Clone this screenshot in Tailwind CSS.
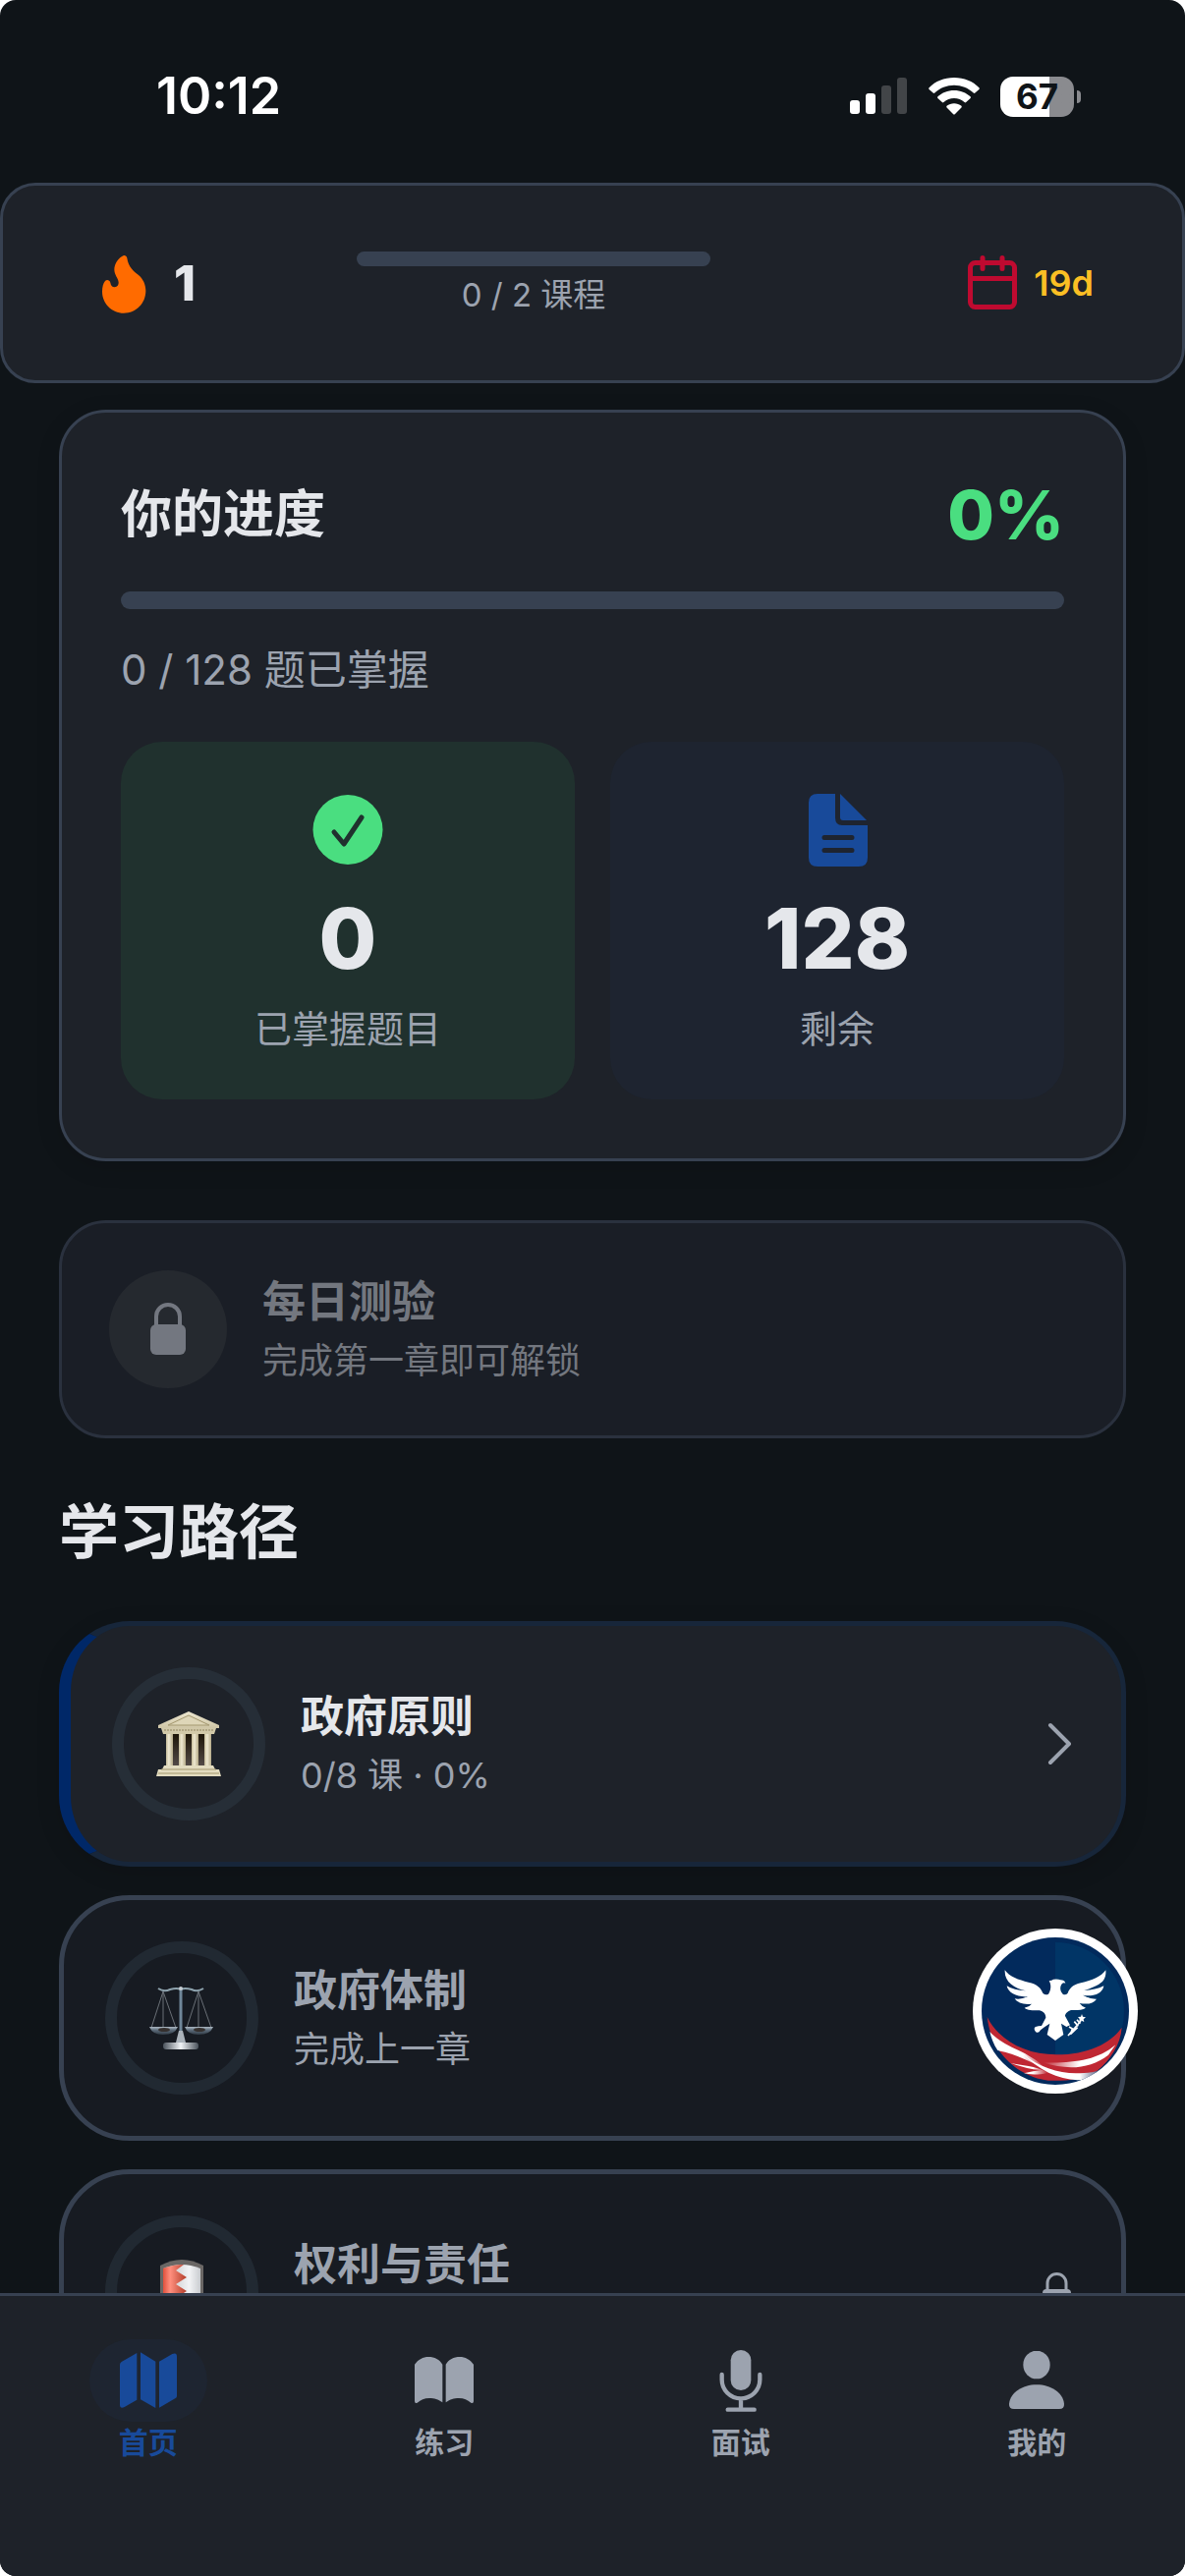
<!DOCTYPE html>
<html lang="zh-CN">
<head>
<meta charset="UTF-8" />
<meta name="viewport" content="width=device-width, initial-scale=1" />
<title>学习路径</title>
<script src="https://cdn.jsdelivr.net/npm/@tailwindcss/browser@4"></script>
<style>
  body {
    background-color: #ffffff;
    font-family: 'Inter', 'Noto Sans CJK SC', sans-serif;
  }
</style>
</head>
<body>
<div class="relative h-screen flex flex-col overflow-hidden rounded-2xl bg-[#0f1418] text-[#e5e7eb]">

  <!-- Status bar -->
  <div class="h-[186px] shrink-0 pt-[68px] pl-[159px] pr-[106px]">
    <div class="h-[60px] flex items-center justify-between text-white">
      <time class="text-[52px] leading-[60px] font-semibold">10:12</time>
      <div class="flex items-center gap-[21px]">
        <svg class="w-[59px] h-[38px]" viewBox="0 0 59 38" fill="#fff" aria-label="Signal">
          <rect x="0" y="23" width="10" height="14" rx="3" />
          <rect x="16" y="16" width="10" height="21" rx="3" />
          <rect x="32" y="8" width="10" height="29" rx="3" fill="#424548" />
          <rect x="48" y="0" width="10" height="37" rx="3" fill="#424548" />
        </svg>
        <svg class="w-[52px] h-[38px]" viewBox="0 0 152 112" fill="#fff" aria-label="Wi-Fi">
          <path d="M76 0C106 0 132 11 151 30Q153 33 151 35L139 46Q137 48 134 46C118 31 98 23 76 23C54 23 34 31 18 46Q15 48 13 46L1 35Q-1 33 1 30C20 11 46 0 76 0Z" />
          <path d="M76 38C95 38 112 45 125 57Q127 60 125 62L112 74Q110 76 107 74C98 66 88 62 76 62C64 62 54 66 45 74Q42 76 40 74L27 62Q25 60 27 57C40 45 57 38 76 38Z" />
          <path d="M76 77C84 77 92 80 98 85Q100 88 98 90L79 109Q76 112 73 109L54 90Q52 88 54 85C60 80 68 77 76 77Z" />
        </svg>
        <div class="flex items-center gap-[3px]">
          <div class="w-[75px] h-[41px] rounded-[13px] bg-linear-to-r from-white from-67% to-[#8a8b8f] to-67% text-[#0f1418] text-[35px] leading-[41px] font-bold text-center">67</div>
          <div class="w-[4px] h-[13px] rounded-r-full bg-[#8a8b8f]"></div>
        </div>
      </div>
    </div>
  </div>

  <!-- Streak / daily goal / countdown -->
  <header class="shrink-0 h-[204px] flex items-center pl-[93px] pr-[90px] rounded-[36px] border-3 border-[#374151] bg-[#1e2229]">
    <div class="w-[267px] flex items-center gap-[21px]">
      <svg class="w-[60px] h-[60px]" viewBox="48 54 180 180" overflow="visible" fill="#ff6b00">
        <path d="M138 60C142 59 147 62 148 68C152 95 168 108 183 120C197 132 205 149 205 168C205 206 176 236 138 236C101 236 72 206 72 170C72 157 75 145 81 138C86 133 95 135 97 143C98 151 102 157 110 157C118 156 123 150 122 142C120 128 109 120 109 103C109 86 122 66 138 60Z" />
      </svg>
      <span class="text-[50px] leading-[60px] font-extrabold">1</span>
    </div>
    <div class="w-[360px]">
      <div class="h-[15px] rounded-full bg-[#374151]" role="progressbar" aria-valuenow="0" aria-valuemax="2" aria-label="课程"></div>
      <p class="mt-2 text-[33px] leading-[42px] text-center text-[#9ca3af]">0 / 2 课程</p>
    </div>
    <div class="ml-auto flex items-center gap-3">
      <svg class="w-[60px] h-[60px]" viewBox="979 258 60 60" fill="none" stroke="#bf0a30" stroke-width="5" stroke-linecap="round">
        <rect x="986.5" y="267.5" width="45" height="45" rx="5" />
        <path d="M987 283.500H1031M999 262.500V273.500M1019 262.500V273.500" />
      </svg>
      <span class="text-[36px] leading-[48px] font-semibold text-[#fbbf24]">19d</span>
    </div>
  </header>

  <main class="flex-1 min-h-0 overflow-hidden px-[60px] pt-[27px]">

    <!-- Progress -->
    <section class="p-[60px] rounded-[48px] border-3 border-[#374151] bg-[#1e2229] shadow-[0_6px_24px_rgba(0,0,0,0.12)]">
      <div class="h-[88px] flex items-center justify-between">
        <h2 class="text-[52px] leading-[66px] font-bold">你的进度</h2>
        <span class="text-[69px] leading-[86px] font-extrabold text-[#4ade80]">0%</span>
      </div>
      <div class="mt-[34px] h-[18px] rounded-full bg-[#374151]" role="progressbar" aria-valuenow="0" aria-valuemax="128" aria-label="你的进度"></div>
      <p class="mt-[36px] text-[42px] leading-[51px] text-[#9ca3af]">0 / 128 题已掌握</p>
      <div class="mt-[48px] grid grid-cols-2 gap-[36px]">
        <div class="py-[48px] flex flex-col items-center rounded-[42px] bg-[#20312e]">
          <svg class="w-[84px] h-[84px]" viewBox="311 803 84 84" fill="none">
            <circle cx="353" cy="844.500" r="35.500" fill="#4ade80" />
            <path d="M339 847L349 859L367 832" stroke="#20312e" stroke-width="5" stroke-linecap="round" stroke-linejoin="round" />
          </svg>
          <span class="my-[18px] text-[85px] leading-[101px] font-extrabold">0</span>
          <span class="text-[38px] leading-[47px] text-[#9ca3af]">已掌握题目</span>
        </div>
        <div class="py-[48px] flex flex-col items-center rounded-[42px] bg-[#1e2430]">
          <svg class="w-[84px] h-[84px]" viewBox="810 803 84 84" fill="#184a9a">
            <path d="M832 808H850V832Q850 840 857 840H883V873Q883 882 874 882H832Q823 882 823 873V817Q823 808 832 808Z" />
            <path d="M855 808L882 835H858Q855 835 855 832Z" />
            <path d="M839 852.500H867M839 865.500H867" stroke="#1e2430" stroke-width="5" stroke-linecap="round" />
          </svg>
          <span class="my-[18px] text-[85px] leading-[101px] font-extrabold">128</span>
          <span class="text-[38px] leading-[47px] text-[#9ca3af]">剩余</span>
        </div>
      </div>
    </section>

    <!-- Daily quiz, locked -->
    <button type="button" disabled class="mt-[60px] w-full p-[48px] flex items-center gap-[36px] text-left rounded-[48px] border-3 border-[#2a313e] bg-[#1a1e26] text-[#73777f]">
      <span class="w-[120px] h-[120px] flex items-center justify-center rounded-full bg-[#25292f]">
        <svg class="w-[60px] h-[60px]" viewBox="141 1323 60 60" fill="#737780">
          <rect x="153" y="1348" width="36" height="31" rx="6" />
          <path d="M159 1350V1340a12 12 0 0 1 24 0V1350" fill="none" stroke="#737780" stroke-width="4" />
        </svg>
      </span>
      <span class="flex flex-col gap-2">
        <span class="text-[44px] leading-[56px] font-bold">每日测验</span>
        <span class="text-[36px] leading-[48px]">完成第一章即可解锁</span>
      </span>
    </button>

    <h2 class="mt-[60px] text-[61px] leading-[72px] font-bold">学习路径</h2>

    <!-- Chapters -->
    <div class="mt-[54px] flex flex-col gap-[29px]">
      <a href="#" class="p-[42px] flex items-center rounded-[72px] border-5 border-l-12 border-[#17263a] border-l-[#002868] bg-[#1e2229] shadow-[0_6px_24px_rgba(0,0,0,0.12)]">
        <span class="w-[156px] h-[156px] flex items-center justify-center rounded-full border-12 border-[#262e37]">
          <svg class="w-[66px] h-[67px]" viewBox="0 0 66 67">
            <defs>
              <linearGradient id="stone" x1="0" x2="0" y1="0" y2="1">
                <stop offset="0" stop-color="#ece6cf" />
                <stop offset="1" stop-color="#cfc6a6" />
              </linearGradient>
              <linearGradient id="column" x1="0" x2="1" y1="0" y2="0">
                <stop offset="0" stop-color="#c4ba98" />
                <stop offset="0.4" stop-color="#efe9d2" />
                <stop offset="1" stop-color="#b5aa88" />
              </linearGradient>
              <linearGradient id="inside" x1="0" x2="0" y1="0" y2="1">
                <stop offset="0" stop-color="#1d1508" />
                <stop offset="1" stop-color="#544b48" />
              </linearGradient>
            </defs>
            <path d="M33 0L64 14V17H2V14Z" fill="url(#stone)" />
            <path d="M33 4L54 14H12Z" fill="#ded6b8" stroke="#a3976f" />
            <path d="M5 17H61L59 23H7Z" fill="#d2c9a9" />
            <path d="M8 19H58" stroke="#8f8461" stroke-dasharray="2 1" />
            <rect x="10" y="23" width="46" height="33" fill="url(#inside)" />
            <rect x="10" y="23" width="7" height="33" fill="url(#column)" />
            <rect x="23" y="23" width="7" height="33" fill="url(#column)" />
            <rect x="36" y="23" width="7" height="33" fill="url(#column)" />
            <rect x="49" y="23" width="7" height="33" fill="url(#column)" />
            <path d="M8 55H58L60 59H64L66 66H0L2 59H6Z" fill="#e3dcc0" />
            <path d="M5 59H61M2 63H64" stroke="#a3976f" />
          </svg>
        </span>
        <span class="ml-[36px] flex-1 flex flex-col gap-2">
          <span class="text-[44px] leading-[56px] font-bold">政府原则</span>
          <span class="text-[36px] leading-[48px] text-[#9ca3af]">0/8 课 · 0%</span>
        </span>
        <svg class="w-[48px] h-[48px]" viewBox="0 0 48 48" fill="none" stroke="#9ca3af" stroke-width="4" stroke-linecap="round" stroke-linejoin="round">
          <path d="M18 5L37 24L18 43" />
        </svg>
      </a>

      <a href="#" aria-disabled="true" class="p-[42px] flex items-center rounded-[72px] border-5 border-[#374151] bg-[#171b22] text-[#9ca3af]">
        <span class="w-[156px] h-[156px] flex items-center justify-center rounded-full border-12 border-[#212932]">
          <svg class="w-[66px] h-[66px]" viewBox="152 2022 66 66" fill="none">
            <defs>
              <linearGradient id="steel" x1="0" x2="0" y1="0" y2="1">
                <stop offset="0" stop-color="#aebac4" />
                <stop offset="0.4" stop-color="#5e6d7c" />
                <stop offset="1" stop-color="#303a44" />
              </linearGradient>
              <linearGradient id="foot" x1="0" x2="1" y1="0" y2="0">
                <stop offset="0" stop-color="#4a525b" />
                <stop offset="0.5" stop-color="#f1f4f7" />
                <stop offset="1" stop-color="#4a525b" />
              </linearGradient>
            </defs>
            <path d="M161 2025Q167 2029 173 2026Q180 2024 184 2026Q188 2024 195 2026Q201 2029 207 2025" stroke="#8ea3ae" stroke-width="2" />
            <path d="M166 2028L154 2065M166 2028V2065M166 2028L179 2065M202 2028L190 2065M202 2028V2065M202 2028L215 2065" stroke="#6a7077" />
            <path d="M152 2064H181Q178 2072 166 2072Q155 2072 152 2064Z" fill="url(#steel)" />
            <path d="M188 2064H217Q214 2072 202 2072Q191 2072 188 2064Z" fill="url(#steel)" />
            <ellipse cx="167" cy="2067" rx="6" ry="2" fill="#35302e" />
            <ellipse cx="203" cy="2067" rx="6" ry="2" fill="#35302e" />
            <path d="M184 2026V2078" stroke="#6f8799" stroke-width="3" />
            <path d="M182 2068H186L189 2080H179Z" fill="#aab2ba" />
            <circle cx="184" cy="2025" r="2" fill="#c4ccd2" />
            <rect x="166" y="2080" width="36" height="7" rx="3" fill="url(#foot)" />
          </svg>
        </span>
        <span class="ml-[36px] flex-1 flex flex-col gap-2">
          <span class="text-[44px] leading-[56px] font-bold">政府体制</span>
          <span class="text-[36px] leading-[48px]">完成上一章</span>
        </span>
      </a>

      <a href="#" aria-disabled="true" class="p-[42px] flex items-center rounded-[72px] border-5 border-[#374151] bg-[#171b22] text-[#9ca3af]">
        <span class="w-[156px] h-[156px] flex items-center justify-center rounded-full border-12 border-[#212932]">
          <svg class="w-[66px] h-[66px]" viewBox="0 0 66 66">
            <defs>
              <linearGradient id="red" x1="0" x2="1" y1="0" y2="0">
                <stop offset="0" stop-color="#e0503c" />
                <stop offset="0.3" stop-color="#ff8f7e" />
                <stop offset="1" stop-color="#b33d2a" />
              </linearGradient>
              <linearGradient id="white" x1="0" x2="1" y1="0" y2="0">
                <stop offset="0" stop-color="#b9bbbd" />
                <stop offset="0.7" stop-color="#f2f3f5" />
                <stop offset="1" stop-color="#c9ccd0" />
              </linearGradient>
            </defs>
            <path d="M11 6Q22 0 33 0Q44 0 55 6V38Q53 55 33 65Q13 55 11 38Z" fill="#6a6765" />
            <path d="M14 9Q24 5 33 5Q42 5 52 9V38Q50 52 33 61Q16 52 14 38Z" fill="url(#white)" />
            <path d="M14 9Q24 5 35 5L27 11L38 18L27 25L38 32L27 39L37 46L33 61Q16 52 14 38Z" fill="url(#red)" />
          </svg>
        </span>
        <span class="ml-[36px] flex-1 h-[112px]">
          <span class="text-[44px] leading-[56px] font-bold">权利与责任</span>
        </span>
        <svg class="w-[48px] h-[48px]" viewBox="1051 2308 48 48" fill="#9ca3af">
          <rect x="1061" y="2329" width="29" height="24" rx="4" />
          <path d="M1066 2330V2323a9.500 9.500 0 0 1 19 0V2330" fill="none" stroke="#9ca3af" stroke-width="3" />
        </svg>
      </a>
    </div>
  </main>

  <!-- Floating assistant button -->
  <button type="button" aria-label="助手" class="absolute right-[48px] bottom-[491px] w-[168px] h-[168px] rounded-full">
    <svg class="w-full h-full" viewBox="270 188 504 504">
      <defs>
        <clipPath id="disc"><circle cx="522" cy="440" r="225" /></clipPath>
        <linearGradient id="fadeLeft" x1="0" x2="1" y1="0" y2="0">
          <stop offset="0" stop-color="#fff" />
          <stop offset="0.6" stop-color="#fff" />
          <stop offset="1" stop-color="#fff" stop-opacity="0" />
        </linearGradient>
        <linearGradient id="fadeRight" x1="0" x2="1" y1="0" y2="0">
          <stop offset="0" stop-color="#fff" stop-opacity="0" />
          <stop offset="0.5" stop-color="#fff" />
          <stop offset="1" stop-color="#fff" />
        </linearGradient>
        <linearGradient id="swoosh" x1="0" x2="1" y1="0" y2="0">
          <stop offset="0" stop-color="#fff" />
          <stop offset="0.7" stop-color="#fff" />
          <stop offset="1" stop-color="#28325e" />
        </linearGradient>
      </defs>
      <circle cx="522" cy="440" r="252" fill="#fff" />
      <circle cx="522" cy="440" r="225" fill="#022a5c" />
      <g clip-path="url(#disc)">
        <path d="M522 230A210 210 0 0 1 522 650Z" fill="#013566" />
        <!-- flag ribbon -->
        <path d="M314 458C350 530 430 573 525 573C620 573 690 540 725 490C722 540 690 590 650 622C600 652 545 654 500 652C440 645 385 610 350 560C330 530 318 495 314 458Z" fill="#bf2733" />
        <path d="M322 503C350 535 395 552 430 570C460 588 480 600 492 618C460 600 400 570 346 560C334 542 326 522 322 503Z" fill="url(#fadeLeft)" />
        <path d="M385 598C420 606 460 606 500 628C460 638 440 632 426 630Q455 622 480 620Q430 616 385 598Z" fill="url(#fadeLeft)" />
        <path d="M706 543C650 592 570 600 485 597C560 622 630 616 684 574Z" fill="url(#fadeRight)" />
        <path d="M422 570C470 610 530 630 585 630C620 630 650 628 672 612C655 635 620 650 590 651C530 648 470 620 422 570Z" fill="url(#swoosh)" />
      </g>
      <!-- eagle -->
      <g fill="#fff">
        <path d="M368 315C382 335 410 345 440 352C468 358 478 370 484 385Q492 393 501 388C509 376 509 362 506 354L503 348Q512 347 516 343Q530 341 538 345Q550 345 553 355Q547 352 541 358C535 368 537 380 545 388Q553 393 560 385C566 370 575 360 600 354C635 346 662 335 676 315C678 335 670 350 655 358Q640 367 610 377Q645 376 670 363C668 380 652 390 635 392Q620 394 606 391Q628 404 648 403C638 418 620 420 596 416Q605 428 615 430C605 438 585 437 570 437C560 440 552 448 552 455L567 483L556 488L540 478L547 512L522 530L497 512L505 478L490 488L477 498Q470 510 462 503Q454 492 462 488Q470 485 480 485L493 460C493 448 485 441 474 438C450 438 438 438 428 430Q442 428 450 418C425 421 407 415 398 402Q415 406 438 396C405 398 378 385 374 363Q395 377 432 378C395 370 366 350 368 315Z" />
        <path d="M603 449L606 457L615 459L608 465L610 473L602 469L595 473L596 464L591 458L600 457Z" />
        <path d="M561 515L600 470M564 488L578 496M580 472L592 486M588 466L598 478M574 495L568 511L590 490" fill="none" stroke="#fff" stroke-width="5" />
      </g>
    </svg>
  </button>

  <!-- Tab bar -->
  <nav class="relative shrink-0 h-[288px] grid grid-cols-4 items-start pt-[44px] border-t-3 border-[#374151] bg-[#1e2229] text-[30px] leading-[42px] font-semibold text-[#9ca3af]">
    <a href="#" aria-current="page" class="flex flex-col items-center text-[#184a9a]">
      <span class="w-[120px] h-[84px] flex items-center justify-center rounded-full bg-[#1e2531]">
        <svg class="w-[60px] h-[60px]" viewBox="123 99 180 180" fill="currentColor">
          <path d="M126 141Q126 135 131 132L178 105V248L140 270Q126 276 126 263Z" />
          <path d="M189 103L235 131V273L189 247Z" />
          <path d="M246 131L286 108Q300 102 300 116V236Q300 241 296 243L246 272Z" />
        </svg>
      </span>
      首页
    </a>
    <a href="#" class="flex flex-col items-center">
      <span class="h-[84px] flex items-center">
        <svg class="w-[60px] h-[60px]" viewBox="1029 99 180 180" fill="currentColor">
          <path d="M1029 140C1040 125 1055 117 1071 117C1090 117 1105 125 1114 140V256C1100 246 1090 243 1074 243C1058 243 1048 248 1037 257Q1029 260 1029 252Z" />
          <path d="M1209 140C1198 125 1183 117 1167 117C1148 117 1133 125 1124 140V256C1138 246 1148 243 1164 243C1180 243 1190 248 1201 257Q1209 260 1209 252Z" />
        </svg>
      </span>
      练习
    </a>
    <a href="#" class="flex flex-col items-center">
      <span class="h-[84px] flex items-center">
        <svg class="w-[60px] h-[60px]" viewBox="73 99 180 180" overflow="visible" fill="currentColor">
          <rect x="132" y="96" width="62" height="123" rx="31" />
          <path d="M105 171V187a58 57 0 0 0 116 0V171M163 245V278M123 278H204" fill="none" stroke="currentColor" stroke-width="13" stroke-linecap="round" />
        </svg>
      </span>
      面试
    </a>
    <a href="#" class="flex flex-col items-center">
      <span class="h-[84px] flex items-center">
        <svg class="w-[60px] h-[60px]" viewBox="978 99 180 180" fill="currentColor">
          <ellipse cx="1068" cy="141" rx="41" ry="43" />
          <path d="M999 276Q983 276 984 260C988 226 1024 202 1068 202C1112 202 1148 226 1152 260Q1153 276 1137 276Z" />
        </svg>
      </span>
      我的
    </a>
  </nav>
</div>
</body>
</html>
